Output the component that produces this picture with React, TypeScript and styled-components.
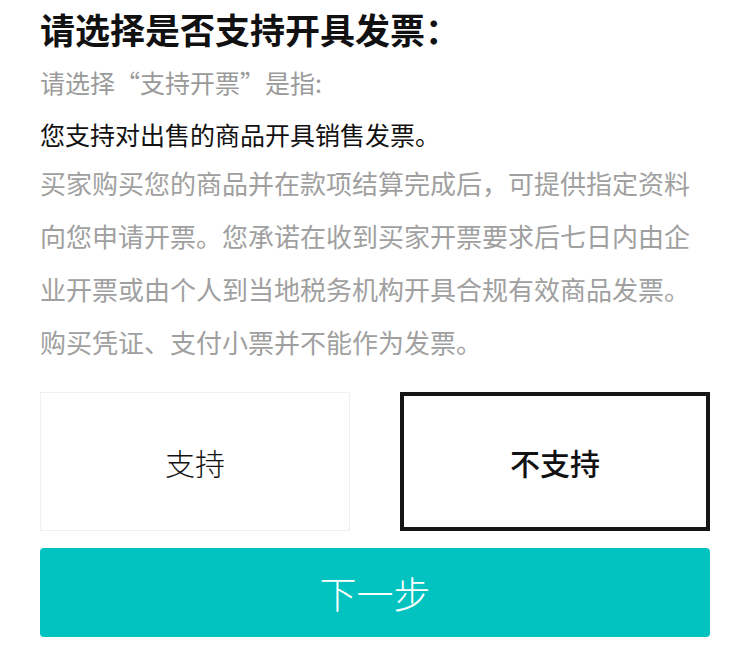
import React, { useState } from 'react'
import styled, { createGlobalStyle } from 'styled-components'

/**
 * ------------------------- STYLES -------------------------------
 */
const GlobalStyle = createGlobalStyle`
  html, body {
    margin: 0;
    padding: 0;
    background: #fff;
    font-family: "Noto Sans CJK SC", "Noto Sans", sans-serif;
  }
`

const Page = styled.main`
  padding: 5px 40px 0;
  display: flex;
  flex-direction: column;
`

const Title = styled.h1`
  margin: 0;
  font-size: 35px;
  line-height: 48px;
  font-weight: 700;
  color: #111;
`

const Hint = styled.p`
  margin: 11px 0 0;
  font-size: 25px;
  line-height: 36px;
  color: #9a9a9a;
`

const Lead = styled.p`
  margin: 16px 0 0;
  font-size: 25px;
  line-height: 36px;
  color: #111;
`

const Detail = styled.p`
  margin: 4px 0 0;
  font-size: 26px;
  line-height: 53px;
  color: #a0a0a0;
`

const Options = styled.div`
  margin-top: 24px;
  display: grid;
  grid-template-columns: 1fr 1fr;
  column-gap: 50px;
`

const Option = styled.button<{ selected: boolean }>`
  height: 139px;
  background: #fff;
  border: ${p => (p.selected ? '4px solid #161616' : '1px solid #f0f0f0')};
  font-family: inherit;
  font-size: 30px;
  font-weight: ${p => (p.selected ? 500 : 300)};
  color: #111;
  cursor: pointer;
  display: flex;
  align-items: center;
  justify-content: center;
`

const NextBtn = styled.button`
  margin-top: 17px;
  height: 89px;
  border: none;
  border-radius: 4px;
  background: #03c3c1;
  color: #fff;
  font-family: inherit;
  font-size: 37px;
  font-weight: 300;
  cursor: pointer;
`

/**
 * ----------------------- COMPONENT -------------------------------
 */
const App: React.FC = () => {
  const [support, setSupport] = useState(false)

  return (
    <>
      <GlobalStyle />
      <Page>
        <Title>请选择是否支持开具发票：</Title>
        <Hint>请选择“支持开票”是指:</Hint>
        <Lead>您支持对出售的商品开具销售发票。</Lead>
        <Detail>
          买家购买您的商品并在款项结算完成后，可提供指定资料向您申请开票。您承诺在收到买家开票要求后七日内由企业开票或由个人到当地税务机构开具合规有效商品发票。购买凭证、支付小票并不能作为发票。
        </Detail>
        <Options>
          <Option selected={support} onClick={() => setSupport(true)}>
            支持
          </Option>
          <Option selected={!support} onClick={() => setSupport(false)}>
            不支持
          </Option>
        </Options>
        <NextBtn>下一步</NextBtn>
      </Page>
    </>
  )
}

export default App
